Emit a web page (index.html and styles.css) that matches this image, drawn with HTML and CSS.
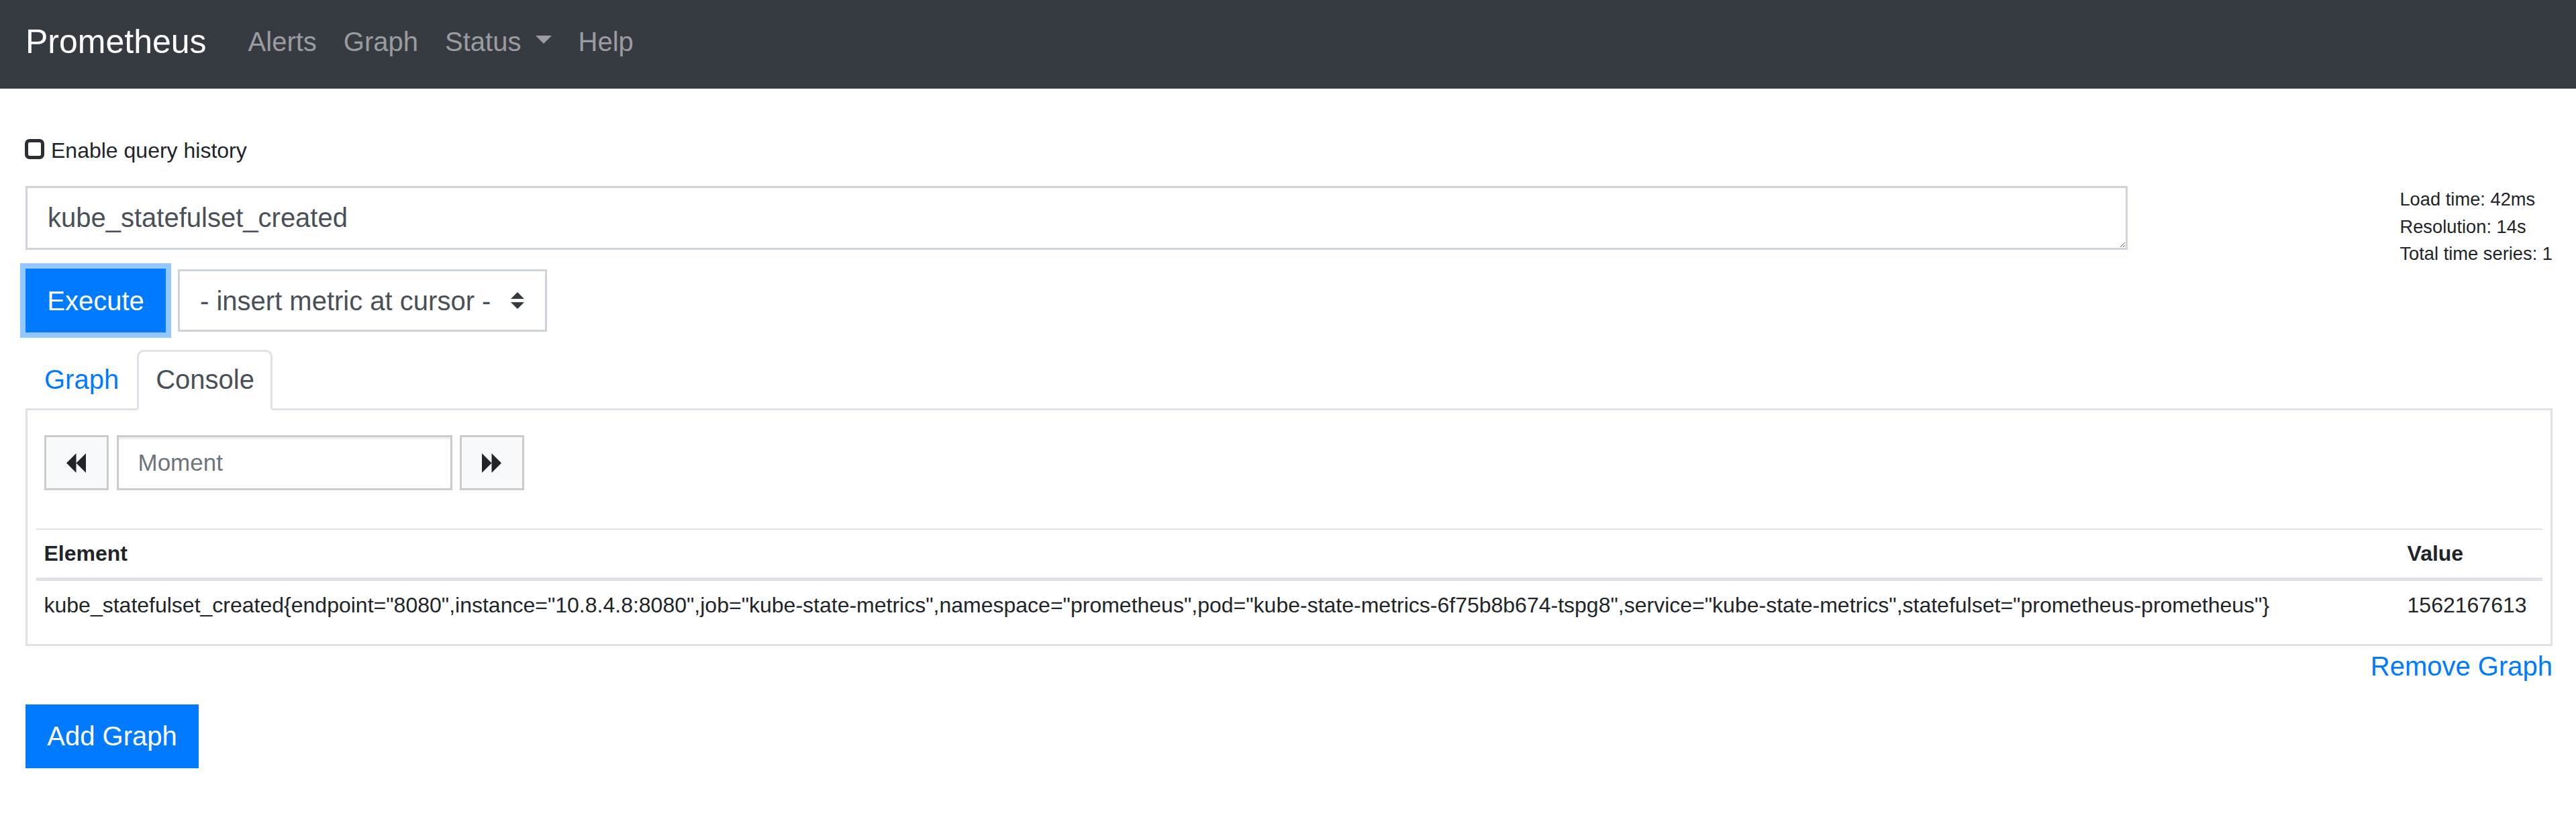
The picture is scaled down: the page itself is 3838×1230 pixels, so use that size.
FILE: index.html
```html
<!DOCTYPE html>
<html lang="en">
<head>
<meta charset="utf-8">
<title>Prometheus Time Series Collection and Processing Server</title>
<link rel="stylesheet" href="styles.css">
</head>
<body>
<nav class="navbar">
  <a class="brand" href="#">Prometheus</a>
  <a class="nav-link" href="#">Alerts</a>
  <a class="nav-link" href="#">Graph</a>
  <a class="nav-link" href="#">Status <span class="caret"></span></a>
  <a class="nav-link" href="#">Help</a>
</nav>

<main class="page">
  <label class="history">
    <input type="checkbox" class="history-check">
    <span>Enable query history</span>
  </label>

  <div class="query-row">
    <textarea class="expr" rows="1">kube_statefulset_created</textarea>
    <div class="stats">
      <div>Load time: 42ms</div>
      <div>Resolution: 14s</div>
      <div>Total time series: 1</div>
    </div>
  </div>

  <div class="exec-row">
    <button class="btn btn-primary focused">Execute</button>
    <div class="metric-select">
      <span>- insert metric at cursor -</span>
      <svg class="select-arrow" viewBox="0 0 4 5" width="20" height="25"><path d="M2 0L0 2h4zm0 5L0 3h4z" fill="#343a40"/></svg>
    </div>
  </div>

  <ul class="tabs">
    <li class="tab"><a href="#">Graph</a></li>
    <li class="tab active"><a href="#">Console</a></li>
  </ul>

  <div class="panel">
    <div class="moment-row">
      <button class="step-btn" aria-label="back">
        <svg viewBox="0 0 30 30" width="29" height="29"><path d="M0 15 L15 0 L15 30 Z M15 15 L30 0 L30 30 Z" fill="#212529"/></svg>
      </button>
      <input class="moment-input" type="text" placeholder="Moment">
      <button class="step-btn" aria-label="forward">
        <svg viewBox="0 0 30 30" width="29" height="29"><path d="M30 15 L15 0 L15 30 Z M15 15 L0 0 L0 30 Z" fill="#212529"/></svg>
      </button>
    </div>

    <table class="result-table">
      <thead>
        <tr><th>Element</th><th>Value</th></tr>
      </thead>
      <tbody>
        <tr>
          <td>kube_statefulset_created{endpoint="8080",instance="10.8.4.8:8080",job="kube-state-metrics",namespace="prometheus",pod="kube-state-metrics-6f75b8b674-tspg8",service="kube-state-metrics",statefulset="prometheus-prometheus"}</td>
          <td>1562167613</td>
        </tr>
      </tbody>
    </table>
  </div>

  <div class="remove-row"><a href="#">Remove Graph</a></div>

  <button class="btn btn-primary add-btn">Add Graph</button>
</main>
</body>
</html>
```

FILE: styles.css
```css
* { box-sizing: border-box; }

html, body {
  margin: 0;
  padding: 0;
  background: #fff;
}

body {
  font-family: "Liberation Sans", Arial, sans-serif;
  color: #212529;
  font-size: 40px;
  line-height: 1.5;
}

a { text-decoration: none; }

/* ---------- navbar ---------- */
.navbar {
  display: flex;
  align-items: center;
  height: 132px;
  padding: 0 38px 9px 38px;
  background: #363a41;
}

.brand {
  font-size: 50px;
  line-height: 1;
  color: #fff;
  margin-right: 42px;
  white-space: nowrap;
}

.nav-link {
  font-size: 40px;
  line-height: 1;
  padding: 0 20px;
  color: rgba(255, 255, 255, 0.5);
  white-space: nowrap;
}

.caret {
  display: inline-block;
  width: 0;
  height: 0;
  margin-left: 10px;
  vertical-align: 0.255em;
  border-top: 12px solid;
  border-left: 12px solid transparent;
  border-right: 12px solid transparent;
}

/* ---------- page ---------- */
.page {
  padding: 0 35px 0 38px;
}

.history {
  display: flex;
  align-items: flex-start;
  margin-top: 67.5px;
  font-size: 32px;
  line-height: 48.75px;
  color: #212529;
}

.history-check {
  appearance: none;
  -webkit-appearance: none;
  width: 29px;
  height: 30px;
  margin: 7.5px 10px 0 -1px;
  border: 5px solid #2b2e33;
  border-radius: 7px;
  background: #fff;
}

.query-row {
  display: flex;
  justify-content: space-between;
  align-items: flex-start;
  margin-top: 28.75px;
}

.expr {
  width: 3132px;
  height: 95px;
  padding: 14px 30px 15px 30px;
  border: 3px solid #ced4da;
  border-radius: 0;
  font-family: "Liberation Sans", Arial, sans-serif;
  font-size: 40px;
  line-height: 60px;
  color: #495057;
  resize: both;
  outline: none;
}

.stats {
  font-size: 27.3px;
  line-height: 40.5px;
  color: #212529;
  white-space: nowrap;
  margin-bottom: -30px;
}

.exec-row {
  display: flex;
  align-items: center;
  gap: 18px;
  margin-top: 28px;
  height: 95px;
}

.btn {
  font-family: "Liberation Sans", Arial, sans-serif;
  font-size: 40px;
  line-height: 60px;
  height: 95px;
  padding: 0 30px;
  border: 2.5px solid #007bff;
  border-radius: 0;
  background: #007bff;
  color: #fff;
  cursor: pointer;
}

.focused {
  width: 209px;
  padding: 0;
  box-shadow: 0 0 0 8px #92c7ff;
}

.metric-select {
  display: flex;
  align-items: center;
  justify-content: space-between;
  width: 550px;
  height: 93px;
  padding: 0 31px 0 30px;
  border: 3px solid #ced4da;
  font-size: 40px;
  color: #495057;
  white-space: nowrap;
}

.select-arrow { display: block; }

/* ---------- tabs ---------- */
.tabs {
  display: flex;
  list-style: none;
  margin: 26px 0 0 0;
  padding: 0;
  border-bottom: 3px solid #dee2e6;
}

.tab {
  margin-bottom: -3px;
  border: 3px solid transparent;
  border-radius: 10px 10px 0 0;
}

.tab a {
  display: block;
  padding: 11px 24px 13px 25px;
  font-size: 40px;
  line-height: 60px;
  color: #007bff;
}

.tab.active {
  border-color: #dee2e6 #dee2e6 #fff;
  background: #fff;
}

.tab.active a { color: #495057; }

/* ---------- panel ---------- */
.panel {
  border: 3px solid #dee2e6;
  border-top: none;
  padding: 12px 12.5px 12px 12.5px;
}

.moment-row {
  display: flex;
  align-items: center;
  margin: 25px 0 0 12px;
  height: 82px;
}

.step-btn {
  display: flex;
  align-items: center;
  justify-content: center;
  width: 96px;
  height: 82px;
  padding: 0;
  border: 3px solid #ccc;
  border-radius: 0;
  background: #f8f9fa;
}

.moment-input {
  width: 500px;
  height: 82px;
  margin: 0 11px 0 12px;
  padding: 0 20px 0 29px;
  border: 3px solid #ccc;
  border-radius: 0;
  font-family: "Liberation Sans", Arial, sans-serif;
  font-size: 35px;
  color: #495057;
  box-shadow: inset 0 3px 3px rgba(0, 0, 0, 0.075);
  outline: none;
}

.moment-input::placeholder { color: #6c757d; }

.result-table {
  width: 100%;
  margin: 57px 0 9px 0;
  border-collapse: separate;
  border-spacing: 0;
  font-size: 32px;
  line-height: 48.75px;
  color: #212529;
}

.result-table th {
  text-align: left;
  font-weight: bold;
  padding: 11px 12px;
  border-top: 2px solid #dee2e6;
  border-bottom: 5px solid #dee2e6;
  white-space: nowrap;
}

.result-table td {
  padding: 12px 12px;
  white-space: nowrap;
}

.remove-row {
  text-align: right;
  font-size: 40px;
  line-height: 60px;
}

.remove-row a { color: #007bff; }

.add-btn {
  display: block;
  margin-top: 27px;
  width: 258px;
  padding: 0;
}
```
